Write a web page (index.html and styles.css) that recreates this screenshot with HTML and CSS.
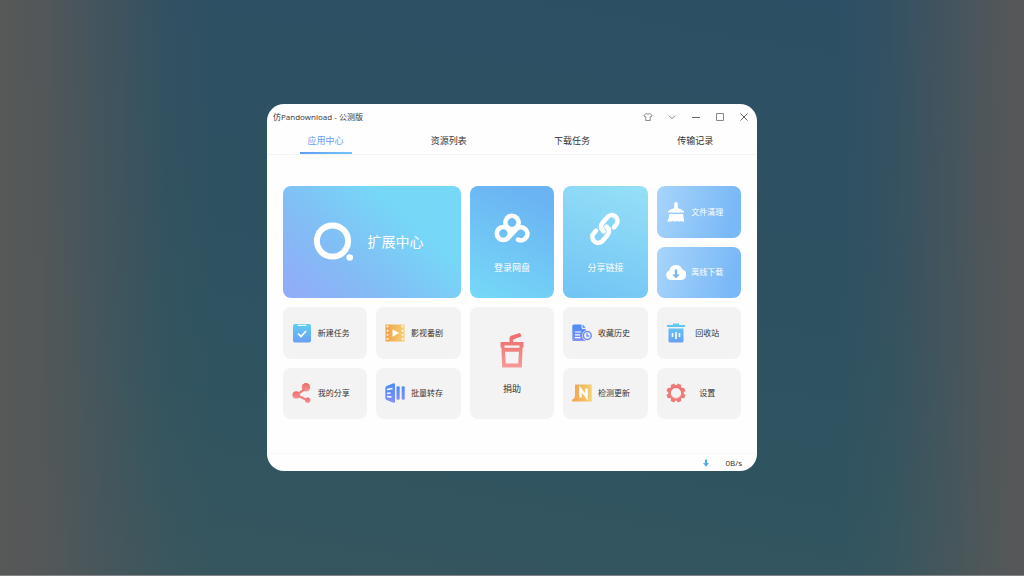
FILE: index.html
```html
<!DOCTYPE html>
<html lang="zh-CN">
<head>
<meta charset="utf-8">
<title>仿Pandownload - 公测版</title>
<meta name="viewport" content="width=device-width, initial-scale=1">
<link rel="stylesheet" href="styles.css">
</head>
<body class="desktop">
<svg class="defs" width="0" height="0" aria-hidden="true">
  <defs>
    <linearGradient id="blue" x1="0" y1="0" x2="0" y2="1"><stop offset="0" stop-color="#5fcdf3"/><stop offset="1" stop-color="#6b9ff6"/></linearGradient>
    <linearGradient id="gold" x1="0" y1="0" x2="1" y2="0"><stop offset="0" stop-color="#f0a14c"/><stop offset="1" stop-color="#f5d172"/></linearGradient>
    <linearGradient id="red" x1="0" y1="0" x2="0" y2="1"><stop offset="0" stop-color="#ee6a6a"/><stop offset="1" stop-color="#f59a97"/></linearGradient>
    <linearGradient id="indigo" x1="0" y1="0" x2="0" y2="1"><stop offset="0" stop-color="#4b8cf5"/><stop offset="1" stop-color="#8490f8"/></linearGradient>
  </defs>
</svg>
<div class="window">
  <header class="titlebar">
    <h1 class="title">仿Pandownload - 公测版</h1>
    <div class="controls">
      <button class="control" type="button" aria-label="皮肤"><svg viewBox="0 0 10 10" class="line"><path d="M3.300 1.500Q5 2.800 6.700 1.500L9 3.200 8 5 7.200 4.700V8.500H2.800V4.700L2 5 1 3.200Z"/></svg></button>
      <button class="control" type="button" aria-label="菜单"><svg viewBox="0 0 10 10" class="line"><path d="M1.700 3.500 5 6.700 8.300 3.500"/></svg></button>
      <button class="control" type="button" aria-label="最小化"><svg viewBox="0 0 10 10" class="line dark"><path d="M1 5.500H9"/></svg></button>
      <button class="control" type="button" aria-label="最大化"><svg viewBox="0 0 10 10" class="line"><path d="M1.500 1.500H8.500V8.500H1.500Z"/></svg></button>
      <button class="control" type="button" aria-label="关闭"><svg viewBox="0 0 10 10" class="line dark"><path d="M1.500 1.500 8.500 8.500M8.500 1.500 1.500 8.500"/></svg></button>
    </div>
  </header>
  <nav class="tabs">
    <a class="tab active" href="#apps" aria-current="page">应用中心</a>
    <a class="tab" href="#resources">资源列表</a>
    <a class="tab" href="#downloads">下载任务</a>
    <a class="tab" href="#history">传输记录</a>
  </nav>
  <main class="tiles">
    <button class="tile hero" type="button">
      <svg class="icon-hero" viewBox="0 0 40 40"><circle cx="19.500" cy="19" r="15.600" fill="none" stroke="#fff" stroke-width="6"/><circle cx="36.700" cy="35.500" r="3.300" fill="#fff"/></svg>
      <span>扩展中心</span>
    </button>
    <button class="tile tall login" type="button">
      <svg class="icon-tall" viewBox="0 0 36 36" fill="none" stroke="#fff" stroke-width="4.600" stroke-linecap="round"><circle cx="18" cy="11.500" r="6.700"/><circle cx="9.300" cy="22.500" r="6.500"/><path d="M13.800 27.200 22.300 18.200A6.500 6.500 0 1 1 24 28.600"/></svg>
      <span>登录网盘</span>
    </button>
    <button class="tile tall link" type="button">
      <svg class="icon-tall" viewBox="0 0 36 36" fill="none" stroke="#fff" stroke-width="4.600" stroke-linecap="round"><g transform="translate(18 18) rotate(-50)"><path id="half" d="M7 5.800H10.500A5.800 5.800 0 0 0 10.500 -5.800H3.200Q-2.700 -5.800 -2.700 .5"/><use href="#half" transform="rotate(180)"/></g></svg>
      <span>分享链接</span>
    </button>
    <button class="tile small pale" type="button">
      <svg class="icon" viewBox="0 0 20 20" fill="#fff"><path d="M8.200 6V1.800a1.800 1.800 0 0 1 3.600 0V6l5 2.200c1 .5 1.300 1.200 1.300 2.400H2C2 9.300 2.300 8.700 3.200 8.200ZM3.200 12H17L18.300 19.600H15.500L14.900 18.500 14.300 19.600H11.500L10.900 18.500 10.300 19.600H7.600L7 18.500 6.300 19.600H1.200Q3.200 16.500 3.200 12Z"/></svg>
      <span>文件清理</span>
    </button>
    <button class="tile small pale" type="button">
      <svg class="icon" viewBox="0 0 20 20"><path fill="#fff" d="M5 18A5 5 0 0 1 3.300 8.400 6.800 6.800 0 0 1 16.200 7.200 5.500 5.500 0 0 1 15 18Z"/><path fill="#78b7f5" d="M8.800 7.500H11.200V12.500H13.700L10 16.500 6.300 12.500H8.800Z"/></svg>
      <span>离线下载</span>
    </button>
    <button class="tile small" type="button">
      <svg class="icon" viewBox="0 0 20 20"><rect x="1" y="1" width="18" height="18.500" rx="2" fill="url(#blue)"/><path d="M6 2.300H14" stroke="#e9f8fd" stroke-width="1.300" stroke-linecap="round"/><path d="M6 10.500 9 13.500 14 8" fill="none" stroke="#fff" stroke-width="1.700"/></svg>
      <span>新建任务</span>
    </button>
    <button class="tile small" type="button">
      <svg class="icon" viewBox="0 0 20 20"><path d="M.5 1.500H19.500V18.500H.5Z" fill="url(#gold)"/><path d="M2.500 2.500V18M17.500 2.500V18" stroke="#fff" stroke-width="1.700" stroke-dasharray="1.700 2.500"/><path d="M7.500 6.200 14 10 7.500 13.800Z" fill="#fff"/></svg>
      <span>影视番剧</span>
    </button>
    <button class="tile tall donate" type="button">
      <svg class="icon-tall" viewBox="0 0 36 36"><path fill="url(#red)" fill-rule="evenodd" d="M6.500 10H15.500V6Q15.500 4.500 17 3.800L26 1 27.500 4.200 19.200 7.500V10H29.500V15.500H28.600L27.800 35.500H8.200L7.400 15.500H6.500ZM10.500 13.500V15.800H25.500V13.500ZM11 19.800 11.800 31.500H24.200L25 19.800Z"/></svg>
      <span>捐助</span>
    </button>
    <button class="tile small" type="button">
      <svg class="icon" viewBox="0 0 20 20"><path d="M1.800 1.500H9.500V4.500Q9.500 6 11 6H13.800V18H1.800Q.3 18 .3 16.500V3Q.3 1.500 1.800 1.500ZM10.500 1.500 13.800 4.800H10.500Z" fill="url(#indigo)"/><path d="M3 9H9M3 11.800H8M3 14.600H8.500" stroke="#fff" stroke-width="1.200"/><circle cx="15.300" cy="12.500" r="5.200" fill="#f3f3f3"/><circle cx="15.300" cy="12.500" r="3.900" fill="#f3f3f3" stroke="#6a8ef6" stroke-width="1.500"/><path d="M15 10.300V13H17.200" fill="none" stroke="#6a8ef6" stroke-width="1.300"/></svg>
      <span>收藏历史</span>
    </button>
    <button class="tile small" type="button">
      <svg class="icon" viewBox="0 0 20 20"><path d="M7 .5H13V2H19V4H1V2H7ZM2.500 5.500H17.500V18Q17.500 19.500 16 19.500H4Q2.500 19.500 2.500 18Z" fill="url(#blue)"/><path d="M6.500 10V14M10 9V16M13.500 10V14" stroke="#fff" stroke-width="1.600"/></svg>
      <span>回收站</span>
    </button>
    <button class="tile small" type="button">
      <svg class="icon" viewBox="0 0 20 20" fill="url(#red)"><circle cx="14" cy="4.300" r="4.200"/><circle cx="4.200" cy="12" r="3.800"/><circle cx="15.700" cy="17.200" r="2.700"/><path d="M12.800 6 4.500 12 15 17" fill="none" stroke="#f08080" stroke-width="2.200"/></svg>
      <span>我的分享</span>
    </button>
    <button class="tile small" type="button">
      <svg class="icon" viewBox="0 0 20 20" fill="url(#indigo)"><path d="M1.500 3 8.500.2Q10 0 10 1.500V18.500Q10 20 8.500 19.800L1.500 17Q.3 16.500.3 15V5Q.3 3.500 1.500 3Z"/><rect x="11.500" y="3.200" width="3.200" height="13.600" rx="1.200"/><rect x="16.700" y="3.200" width="3" height="13.600" rx="1.200"/><path d="M2 6.500 7.500 5.500M2 10.300 5.500 10M2 13.500 6.500 14" stroke="#fff" stroke-width="1.300" fill="none"/></svg>
      <span>批量转存</span>
    </button>
    <button class="tile small" type="button">
      <svg class="icon" viewBox="0 0 20 20"><path d="M3 1.500H19.700V18.500H.2V16.500Q3 16 3 12Z" fill="url(#gold)"/><path d="M8.500 14.500V6L14.500 14V5.500" fill="none" stroke="#fff" stroke-width="2.400"/></svg>
      <span>检测更新</span>
    </button>
    <button class="tile small" type="button">
      <svg class="icon" viewBox="0 0 20 20"><circle cx="10" cy="10" r="6.500" fill="none" stroke="url(#red)" stroke-width="2.800"/><g fill="#ef7878"><path id="tooth" d="M8.200.5H11.800L12.600 4H7.400Z" transform="rotate(22.500 10 10)"/><use href="#tooth" transform="rotate(45 10 10)"/><use href="#tooth" transform="rotate(90 10 10)"/><use href="#tooth" transform="rotate(135 10 10)"/><use href="#tooth" transform="rotate(180 10 10)"/><use href="#tooth" transform="rotate(225 10 10)"/><use href="#tooth" transform="rotate(270 10 10)"/><use href="#tooth" transform="rotate(315 10 10)"/></g></svg>
      <span>设置</span>
    </button>
  </main>
  <footer class="status">
    <svg class="arrow" viewBox="0 0 8 8"><path d="M3 .5H5V4H7L4 7.800 1 4H3Z" fill="#4badf3"/></svg>
    <span>0B/s</span>
  </footer>
</div>
</body>
</html>
```
FILE: styles.css
```css
* { box-sizing: border-box; }

.desktop {
  margin: 0;
  min-height: 100vh;
  display: grid;
  place-items: center;
  font-family: "Open Sans", "Noto Sans CJK SC", sans-serif;
  color: #333;
  border-bottom: 1px solid #818589;
  background:
    linear-gradient(90deg, #575858 0%, #575858e6 4%, #57585880 10%, #57585820 16%, #57585800 21%, #57585800 82%, #57585828 87%, #57585890 93%, #575858e6 98%, #575858 100%),
    linear-gradient(190deg, #2d4f65 0%, #2e5161 45%, #2f5460 70%, #38565e 100%);
}

.defs { position: absolute; }

.window {
  width: 47%;
  min-width: 490px;
  display: flex;
  flex-direction: column;
  overflow: hidden;
  border-radius: 17px;
  background: #fefefe;
}

.titlebar {
  display: flex;
  align-items: center;
  justify-content: space-between;
  height: 25px;
  padding: 0 8px 0 6px;
}

.title {
  margin: 0;
  font-size: 8px;
  font-weight: 400;
  line-height: 12px;
}

.controls { display: flex; gap: 14px; }

.control {
  display: flex;
  padding: 0;
  border: 0;
  background: none;
}

.line {
  width: 10px;
  height: 10px;
  fill: none;
  stroke: #8a8a8a;
  stroke-width: 1;
}

.dark { stroke: #666; }

.tabs {
  display: grid;
  grid-template-columns: repeat(4, 1fr);
  justify-items: center;
  margin-left: -3px;
  border-bottom: 1px solid #f1f2f4;
}

.tab {
  padding: 0 8px;
  font-size: 9px;
  line-height: 23px;
  color: #333;
  text-decoration: none;
  border-bottom: 2px solid transparent;
}

.active {
  color: #5f9df5;
  border-image: linear-gradient(90deg, #609cf5, #72c5f7) 1;
}

.tiles {
  display: grid;
  grid-template-columns: repeat(5, 1fr);
  grid-auto-rows: 1fr;
  gap: 9px;
  min-height: 233px;
  margin: 31px 16px 34px;
}

.tile {
  display: flex;
  align-items: center;
  min-width: 0;
  padding: 0;
  border: 0;
  border-radius: 8px;
  background: #f3f3f3;
  color: #333;
  font-family: inherit;
  font-size: 8px;
  line-height: 12px;
}

.hero {
  grid-column: span 2;
  grid-row: span 2;
  justify-content: center;
  gap: 14px;
  padding-right: 7px;
  background: linear-gradient(42deg, #90adf8 5%, #82bdf5 35%, #76d7f7 70%, #76d7f7 100%);
  color: #fff;
  font-size: 14px;
  line-height: 20px;
}

.icon-hero { width: 40px; height: 40px; }

.tall {
  grid-row: span 2;
  flex-direction: column;
  justify-content: center;
  gap: 15px;
  font-size: 9px;
}

.icon-tall { width: 36px; height: 36px; }

.login {
  background: linear-gradient(205deg, #6bb4f3 15%, #76d9f7 100%);
  color: #fff;
}

.link {
  background: linear-gradient(200deg, #96e0f7 0%, #70c3f4 100%);
  color: #fff;
}

.small {
  padding: 0 12px 0 9px;
}

.small span { flex: 1; text-align: center; }

.icon { width: 20px; height: 20px; flex: none; }

.pale {
  background: linear-gradient(105deg, #a5d3fb 5%, #7ab9f7 85%);
  color: #fff;
}

.status {
  display: flex;
  align-items: center;
  justify-content: flex-end;
  gap: 16px;
  height: 18px;
  padding-right: 15px;
  border-top: 1px solid #f7f7f8;
  font-size: 8px;
}

.arrow { width: 8px; height: 8px; }
```
